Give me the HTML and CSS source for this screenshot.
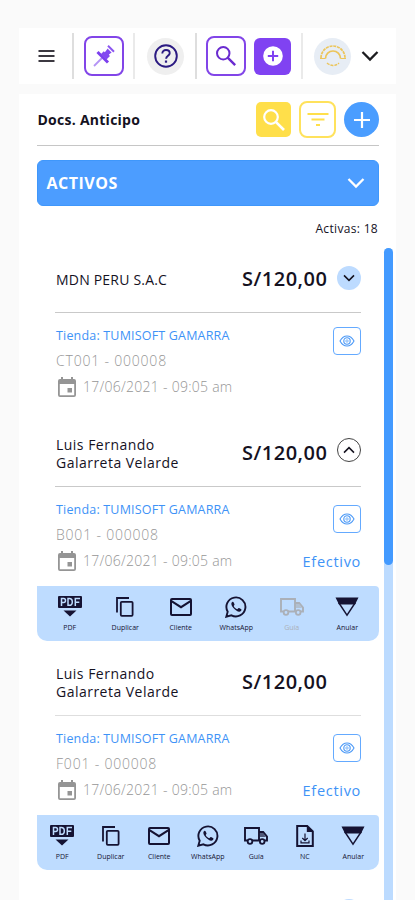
FILE: index.html
```html
<!DOCTYPE html>
<html lang="es">
<head>
<meta charset="utf-8">
<title>Docs. Anticipo</title>
<link rel="stylesheet" href="styles.css">
</head>
<body>
<svg class="defs" aria-hidden="true">
  <symbol id="search" viewBox="0 0 24 24"><circle cx="9" cy="9" r="6.8" fill="none" stroke="currentColor" stroke-width="2.2"/><path d="M13.800 13.800 22 22" stroke="currentColor" stroke-width="2.600"/></symbol>
  <symbol id="down" viewBox="0 0 18 12"><path d="M1.500 2 9 9.500 16.500 2" fill="none" stroke="currentColor" stroke-width="2.300"/></symbol>
  <symbol id="eye" viewBox="0 0 16 12"><path d="M1 6C3 2.300 5.200 1 8 1s5 1.300 7 5c-2 3.700-4.200 5-7 5S3 9.700 1 6Z" fill="none" stroke="currentColor" stroke-width="1.100"/><circle cx="8" cy="6" r="3.200" fill="none" stroke="currentColor" stroke-width="1.100"/><circle cx="8" cy="6" r="1.200" fill="none" stroke="currentColor" stroke-width=".7"/></symbol>
  <symbol id="calendar" viewBox="0 0 18 20"><path d="M0 4Q0 2 2 2h1V0h2v2h8V0h2v2h1q2 0 2 2v14q0 2-2 2H2q-2 0-2-2ZM1.800 7v11.200h14.400V7Z" fill="currentColor" fill-rule="evenodd"/><path d="M9.500 11h4.500v4.500H9.500z" fill="currentColor"/></symbol>
  <symbol id="pdf" viewBox="0 0 24 22"><rect x="0" y="0" width="24" height="12" rx="1" fill="currentColor"/><g fill="none" stroke="#bedcff" stroke-width="1.500"><path d="M3.500 10V2.500h2.200q1.800 0 1.800 2t-1.800 2H3.500M10 2.500v6.800h1.300q3 0 3-3.400t-3-3.400ZM17.300 10V2.500H22M17.300 6.200h4"/></g><path d="M5.500 14.500h13L12 20.500Z" fill="currentColor"/></symbol>
  <symbol id="copy" viewBox="0 0 18 20"><path d="M1 15.500V1h12" fill="none" stroke="currentColor" stroke-width="1.800"/><rect x="4.800" y="4.800" width="11.800" height="14" rx="1" fill="none" stroke="currentColor" stroke-width="1.800"/></symbol>
  <symbol id="mail" viewBox="0 0 22 18"><rect x="1" y="1" width="20" height="16" rx="1" fill="none" stroke="currentColor" stroke-width="2"/><path d="m1.500 3.200 9.500 6 9.500-6" fill="none" stroke="currentColor" stroke-width="2"/></symbol>
  <symbol id="whatsapp" viewBox="0 0 22 22"><path d="m1.300 20.700 1.400-5A9.500 9.500 0 1 1 6.400 19.300Z" fill="none" stroke="currentColor" stroke-width="1.900"/><path d="M7.600 5.800c-2 1-1.400 3.500.6 6 2.600 3.200 6 5 7.700 3.300.8-.9.700-1.700 0-2.100l-1.800-.9c-.9-.4-1.200 1.200-1.900 1.100-1.300-.3-3-1.900-3.400-3-.2-.6 1-1 .7-1.900l-.8-1.900c-.3-.5-.7-.8-1.100-.6Z" fill="currentColor"/></symbol>
  <symbol id="truck" viewBox="0 0 24 18"><path d="M3.500 13.500H1V1h14v12.500H8M15 5h4.200L23 9.500v4h-2.500M15 13.500h1" fill="none" stroke="currentColor" stroke-width="1.900"/><path d="M16 6h3l3 4h-6z" fill="currentColor" opacity=".65"/><circle cx="6" cy="14.500" r="2.300" fill="none" stroke="currentColor" stroke-width="1.800"/><circle cx="18.200" cy="14.500" r="2.300" fill="none" stroke="currentColor" stroke-width="1.800"/></symbol>
  <symbol id="note" viewBox="0 0 18 22"><path d="M1.200 1h10l5.600 5.500V21H1.200Z" fill="none" stroke="currentColor" stroke-width="2"/><path d="M10.800 1v6h6z" fill="currentColor"/><path d="M9 8.500v7M6.300 13 9 15.700 11.700 13M5 15.500v2.300h8v-2.300" fill="none" stroke="currentColor" stroke-width="1.200"/></symbol>
  <symbol id="void" viewBox="0 0 24 20"><path d="M.5.500h23L20 7.500H4Z" fill="currentColor"/><path d="M3.600 5.500 12 18.200l8.400-12.700" fill="none" stroke="currentColor" stroke-width="1.400"/></symbol>
</svg>

<header class="topbar">
  <svg class="menu" viewBox="0 0 16 14"><path d="M0 2h16M0 7h16M0 12h16" stroke="#3c3941" stroke-width="2.200"/></svg>
  <i class="sep"></i>
  <button class="btn outline pin"><svg width="22" height="22" viewBox="0 0 22 22"><path d="M1 21 9 13" stroke="#b493f5" stroke-width="1.800"/><path d="m4.500 7 10.500 10.500" stroke="#7c3fee" stroke-width="3"/><path d="m8 9 6-6 5.500 5.500-6 6Z" fill="#8349f0"/><path d="m15 .8 6 6" stroke="#8b55f0" stroke-width="2"/><path d="m14 2.500-3 4M20 8l-3.500 2.500" stroke="#fff" stroke-width="2.200"/></svg></button>
  <i class="sep pale"></i>
  <span class="help"><svg width="24" height="24" viewBox="0 0 24 24" fill="none" stroke="#2b1a82"><circle cx="12" cy="12" r="10.800" stroke-width="1.900"/><path d="M8.300 9.500C8.300 7.200 9.900 6 12 6s3.700 1.300 3.700 3.200c0 2.500-3.600 2.800-3.600 5.500" stroke-width="1.900"/><path d="M12 16.500v2.200" stroke-width="2.200"/></svg></span>
  <i class="sep"></i>
  <button class="btn outline find"><svg width="22" height="22"><use href="#search"/></svg></button>
  <button class="btn solid"><svg width="20" height="20" viewBox="0 0 20 20"><circle cx="10" cy="10" r="9.800" fill="#fff"/><path d="M10 4.800v10.400M4.800 10h10.400" stroke="#8042f2" stroke-width="2"/></svg></button>
  <i class="sep pale"></i>
  <span class="avatar"><svg width="28" height="24" viewBox="0 0 28 24" fill="none" stroke="#ecc55a"><path d="M2 14a12 12 0 0 1 24 0" stroke-width="1.700" stroke-dasharray="3 .8"/><path d="M6.500 14.500a7.500 7.500 0 0 1 15 0" stroke-width="1.700"/><path d="M1 14.500h5.500M21.500 14.500H27" stroke-width="1"/><path d="M8 19q6 5 12 0" stroke-width="1.500" stroke-dasharray="3 1"/></svg></span>
  <svg class="caret" width="18" height="12"><use href="#down"/></svg>
</header>

<main class="panel">
  <div class="title-row">
    <h1>Docs. Anticipo</h1>
    <button class="y-solid"><svg width="24" height="24"><use href="#search"/></svg></button>
    <button class="y-outline"><svg width="22" height="16" viewBox="0 0 22 16" stroke="#ffdf4a" stroke-width="2.100"><path d="M.5 2h21M4.500 7.500h13M9 13h4"/></svg></button>
    <button class="add"><svg width="16" height="16" viewBox="0 0 16 16"><path d="M8 0v16M0 8h16" stroke="#fff" stroke-width="2.200"/></svg></button>
  </div>
  <div class="accordion"><span>ACTIVOS</span><svg width="18" height="12"><use href="#down"/></svg></div>
  <p class="count"><span>Activas: 18</span></p>

  <div class="scroller">
    <div class="list">
      <article class="card first">
        <div class="head"><span class="name single">MDN PERU S.A.C</span><strong>S/120,00</strong><span class="toggle filled"><svg width="12" height="8"><use href="#down"/></svg></span></div>
        <div class="body">
          <div class="info"><p class="store">Tienda: TUMISOFT GAMARRA</p><p class="code">CT001 - 000008</p><p class="date"><svg width="18" height="20"><use href="#calendar"/></svg><span>17/06/2021 - 09:05 am</span></p></div>
          <div class="side"><span class="view"><svg width="16" height="12"><use href="#eye"/></svg></span></div>
        </div>
      </article>
      <article class="card">
        <div class="head"><span class="name"><b>Luis Fernando</b><b>Galarreta Velarde</b></span><strong>S/120,00</strong><span class="toggle open"><svg width="12" height="8"><use href="#down"/></svg></span></div>
        <div class="body">
          <div class="info"><p class="store">Tienda: TUMISOFT GAMARRA</p><p class="code">B001 - 000008</p><p class="date"><svg width="18" height="20"><use href="#calendar"/></svg><span>17/06/2021 - 09:05 am</span></p></div>
          <div class="side"><span class="view"><svg width="16" height="12"><use href="#eye"/></svg></span><span class="pay">Efectivo</span></div>
        </div>
        <div class="actions six">
          <span><svg width="24" height="22"><use href="#pdf"/></svg>PDF</span>
          <span><svg width="18" height="20"><use href="#copy"/></svg>Duplicar</span>
          <span><svg width="22" height="18"><use href="#mail"/></svg>Cliente</span>
          <span><svg width="22" height="22"><use href="#whatsapp"/></svg>WhatsApp</span>
          <span class="off"><svg width="24" height="18"><use href="#truck"/></svg>Guía</span>
          <span><svg width="24" height="20"><use href="#void"/></svg>Anular</span>
        </div>
      </article>
      <article class="card">
        <div class="head"><span class="name"><b>Luis Fernando</b><b>Galarreta Velarde</b></span><strong>S/120,00</strong><span class="toggle"></span></div>
        <div class="body light">
          <div class="info"><p class="store">Tienda: TUMISOFT GAMARRA</p><p class="code">F001 - 000008</p><p class="date"><svg width="18" height="20"><use href="#calendar"/></svg><span>17/06/2021 - 09:05 am</span></p></div>
          <div class="side"><span class="view"><svg width="16" height="12"><use href="#eye"/></svg></span><span class="pay">Efectivo</span></div>
        </div>
        <div class="actions seven">
          <span><svg width="24" height="22"><use href="#pdf"/></svg>PDF</span>
          <span><svg width="18" height="20"><use href="#copy"/></svg>Duplicar</span>
          <span><svg width="22" height="18"><use href="#mail"/></svg>Cliente</span>
          <span><svg width="22" height="22"><use href="#whatsapp"/></svg>WhatsApp</span>
          <span><svg width="24" height="18"><use href="#truck"/></svg>Guía</span>
          <span><svg width="18" height="22"><use href="#note"/></svg>NC</span>
          <span><svg width="24" height="20"><use href="#void"/></svg>Anular</span>
        </div>
      </article>
      <article class="card first">
        <div class="head last"><span class="name"></span><span class="toggle filled"></span></div>
      </article>
    </div>
    <div class="track"><div class="thumb"></div></div>
  </div>
</main>
</body>
</html>
```
FILE: styles.css
```css
* { box-sizing: border-box; margin: 0; padding: 0; }
body {
  width: 415px; height: 900px; overflow: hidden;
  padding: 28px 19px 0;
  background: #fafafa; color: #15121f;
  font-family: "Open Sans", "Noto Sans", sans-serif;
  display: flex; flex-direction: column; gap: 10px;
}
svg { display: block; flex: none; }
button { border: 0; background: none; display: flex; align-items: center; justify-content: center; flex: none; }
.defs { display: none; }

.topbar { height: 56px; flex: none; background: #fff; display: flex; align-items: center; padding-left: 19px; }
.menu { width: 17px; height: 14px; margin-right: 17px; }
.sep { width: 2px; height: 46px; background: #dedede; flex: none; }
.pale { background: #eaeaea; }
.btn { width: 40px; height: 40px; border-radius: 8px; }
.outline { border: 2px solid #8245e8; color: #6a2bd0; }
.pin { margin: 0 9px 0 10px; }
.help { width: 37px; height: 37px; border-radius: 50%; background: #efefef; margin: 0 11px 0 12px; display: flex; align-items: center; justify-content: center; flex: none; }
.find { margin: 0 8px 0 9px; }
.solid { width: 37px; height: 37px; border-radius: 6px; background: #8042f2; margin-right: 10px; }
.avatar { width: 37px; height: 37px; border-radius: 50%; background: #e7edf5; margin: 0 9.500px 0 11px; display: flex; align-items: center; justify-content: center; flex: none; }
.caret { color: #1c1c1f; }

.panel { height: 806px; background: #fff; padding-left: 18px; display: flex; flex-direction: column; flex: none; }
.title-row { width: 342px; height: 52px; border-bottom: 1.500px solid #c6c6c6; display: flex; align-items: center; flex: none; }
h1 { font-size: 14px; font-weight: 700; letter-spacing: .26px; padding-left: .5px; flex: 1; white-space: nowrap; }
.y-solid { width: 35px; height: 35px; border-radius: 5px; background: #ffdf4a; color: #fff; margin-right: 8px; }
.y-outline { width: 37px; height: 37px; border-radius: 8px; border: 2px solid #ffe25c; margin-right: 8px; }
.add { width: 35px; height: 35px; border-radius: 50%; background: #4a9dff; }
.accordion { width: 342px; height: 46px; margin-top: 14px; border-radius: 6px; background: #4c9dff; border: 1px solid #3f97fb; color: #fff; display: flex; align-items: center; justify-content: space-between; padding: 0 13px 0 8.500px; font-size: 16px; font-weight: 700; flex: none; }
.accordion span { letter-spacing: .5px; }
.count { width: 341px; height: 42px; padding-top: 14px; text-align: right; font-size: 12px; line-height: 17px; letter-spacing: .32px; flex: none; }

.scroller { display: flex; flex: 1; min-height: 0; gap: 4.500px; }
.list { width: 342px; height: 658px; margin-top: -6px; display: flex; flex-direction: column; gap: 4px; overflow: hidden; }
.track { width: 9.500px; height: 652px; background: #bcdbff; border-radius: 5px 5px 0 0; }
.thumb { height: 317px; border-radius: 5px; background: #439aff; }

.card { flex: none; }
.head { height: 70px; margin: 0 18px 0 19px; padding-top: 3px; display: flex; align-items: center; }
.last { padding-top: 5px; }
.name { flex: 1; font-size: 14px; line-height: 18.500px; font-weight: 500; letter-spacing: .48px; white-space: nowrap; padding-top: 3px; }
.name b { display: block; font-weight: 500; }
.name.single { letter-spacing: .2px; }
.head strong { font-size: 20px; line-height: 24px; font-weight: 600; letter-spacing: .5px; margin-right: 8px; width: 87px; white-space: nowrap; }
.toggle { width: 24px; height: 24px; border-radius: 50%; display: flex; align-items: center; justify-content: center; }
.filled { background: #bddbff; margin-top: -2px; }
.open { border: 1px solid #444; margin-top: -6px; }
.open svg { transform: rotate(180deg); }
.body { height: 100px; margin: 0 18px; border-top: 1.500px solid #c9c9c9; display: flex; justify-content: space-between; }
.light { border-top-color: #dedede; }
.info { padding: 12px 0 0 1px; white-space: nowrap; }
.store { color: #3e93f7; font-size: 12.500px; line-height: 22px; letter-spacing: .18px; }
.code { color: #969696; font-size: 14px; line-height: 22px; font-weight: 300; letter-spacing: .8px; margin-top: 2.500px; }
.date { color: #969696; font-size: 14px; line-height: 22px; font-weight: 300; letter-spacing: .26px; display: flex; align-items: center; gap: 7px; margin-top: 4.500px; padding-left: 2px; }
.date svg { color: #959595; }
.side { display: flex; flex-direction: column; align-items: flex-end; padding-top: 18px; }
.first .side { padding-top: 14px; }
.view { width: 28px; height: 28px; border: 1.500px solid #64aaff; border-radius: 4px; color: #4b99f7; display: flex; align-items: center; justify-content: center; }
.pay { color: #3e93f7; font-size: 14.500px; line-height: 22px; letter-spacing: .7px; margin-top: 18px; }
.actions { height: 55px; background: #bedcff; border-radius: 0 4px 10px 10px; display: grid; align-items: start; color: #151333; font-size: 7px; padding-top: 10px; }
.six { grid-template-columns: repeat(6, 55.500px); padding-left: 5px; }
.seven { grid-template-columns: repeat(7, 48.500px); padding-left: 1px; }
.actions span { display: grid; grid-template-rows: 22px 12px; row-gap: 4px; justify-items: center; align-items: center; line-height: 12px; }
.actions .off { color: #abb0b8; }
```
